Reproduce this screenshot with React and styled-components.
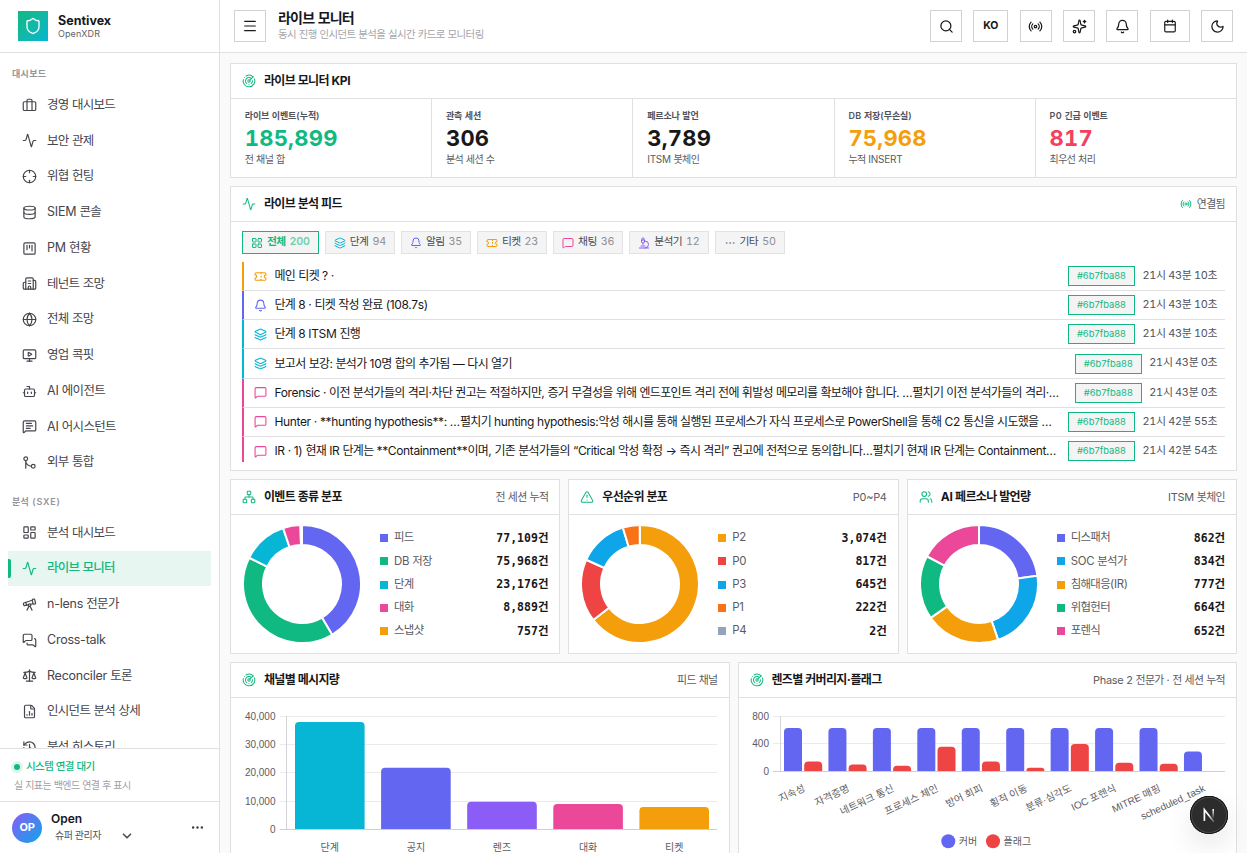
import React from "react";
import styled, { createGlobalStyle, css } from "styled-components";
import {
  Activity,
  Bell,
  Bot,
  Briefcase,
  Building2,
  Calendar,
  ChevronDown,
  Crosshair,
  Database,
  Ellipsis,
  FileChartColumn,
  GitMerge,
  Globe,
  History,
  Layers,
  LayoutDashboard,
  LayoutGrid,
  Menu,
  MessageSquare,
  MessageSquareText,
  MessagesSquare,
  Microscope,
  MonitorPlay,
  Moon,
  Network,
  Radar,
  Radio,
  Scale,
  Search,
  Shield,
  Sparkles,
  SquareKanban,
  Telescope,
  Ticket,
  TriangleAlert,
  Users,
} from "lucide-react";

const GlobalStyle = createGlobalStyle`
  * {
    box-sizing: border-box;
  }

  body {
    margin: 0;
    overflow: hidden;
    background: #fafafa;
    color: #18181b;
    font-family: Inter, "Noto Sans CJK KR", sans-serif;
    font-size: 12px;
    line-height: 1.5;
    letter-spacing: -0.02em;
  }

  svg {
    display: block;
    flex-shrink: 0;
  }
`;

const Hangul = styled.span`
  letter-spacing: calc(-0.056em + ${(p) => p.$track || 0}em);
`;

// Hangul glyphs run wide next to Inter, so they get their own tracking.
const T = ({ children, track }) =>
  String(children)
    .split(/([\uac00-\ud7a3]+)/)
    .map((part, i) =>
      i % 2 ? (
        <Hangul key={i} $track={track}>
          {part}
        </Hangul>
      ) : (
        part
      )
    );

const Shell = styled.div`
  display: flex;
  width: 1247px;
  height: 853px;
  overflow: hidden;
`;

/* sidebar */

const Sidebar = styled.aside`
  display: flex;
  flex-direction: column;
  width: 220px;
  flex-shrink: 0;
  background: #fff;
  border-right: 1px solid #e0e0e2;
`;

const Brand = styled.div`
  display: flex;
  align-items: center;
  gap: 10px;
  height: 53px;
  flex-shrink: 0;
  padding: 0 18px;
  border-bottom: 1px solid #e0e0e2;
`;

const BrandMark = styled.div`
  display: grid;
  place-items: center;
  width: 30px;
  height: 30px;
  color: #fff;
  background: linear-gradient(135deg, #10b981, #12b8a6 50%, #06b6d4);
`;

const BrandName = styled.div`
  font-size: 12.5px;
  font-weight: 700;
  line-height: 14px;
  letter-spacing: 0;
`;

const BrandSub = styled.div`
  font-size: 9px;
  line-height: 11px;
  letter-spacing: 0.01em;
  color: #5f5f66;
`;

const NavScroll = styled.nav`
  flex: 1;
  min-height: 0;
  overflow: hidden;
  padding: 0 8px;
`;

const NavLabel = styled.div`
  padding: ${(p) => p.$top}px 4px 7.25px;
  font-size: 9px;
  font-weight: 600;
  letter-spacing: 0.09em;
  color: #94949b;
`;

const NavItem = styled.div`
  position: relative;
  display: flex;
  align-items: center;
  gap: 10px;
  height: 34.75px;
  margin-bottom: 1px;
  padding: 0 14px;
  font-size: 12.5px;
  color: #45454d;

  ${(p) =>
    p.$active &&
    css`
      color: #10b981;
      font-weight: 500;
      background: #e7f6f1;

      &:before {
        content: "";
        position: absolute;
        left: 0;
        top: 8px;
        bottom: 8px;
        width: 3px;
        background: #10b981;
        border-radius: 0 2px 2px 0;
      }
    `}
`;

const Status = styled.div`
  height: 53px;
  flex-shrink: 0;
  padding: 9px 14px;
  border-top: 1px solid #e0e0e2;
`;

const StatusLine = styled.div`
  display: flex;
  align-items: center;
  gap: 6px;
  font-size: 10.5px;
  font-weight: 500;
  line-height: 17px;
  color: #10b981;
`;

const Dot = styled.i`
  width: 6px;
  height: 6px;
  border-radius: 50%;
  background: #10b981;
  box-shadow: 0 0 0 3px #dcf5ec;
`;

const StatusNote = styled.div`
  margin-top: 2px;
  font-size: 10px;
  line-height: 17px;
  color: #a0a0a6;
`;

const UserBar = styled.div`
  display: flex;
  align-items: center;
  height: 52px;
  flex-shrink: 0;
  padding: 0 14px 0 12px;
  border-top: 1px solid #e0e0e2;
`;

const Avatar = styled.div`
  display: grid;
  place-items: center;
  width: 30px;
  height: 30px;
  border-radius: 50%;
  background: linear-gradient(135deg, #8b5cf6, #0ea5e9);
  color: #fff;
  font-size: 11px;
  font-weight: 700;
`;

const UserInfo = styled.div`
  flex: 1;
  margin-left: 9px;
`;

const UserName = styled.div`
  font-size: 12px;
  font-weight: 600;
  line-height: 16px;
  letter-spacing: 0;
`;

const UserRole = styled.div`
  display: flex;
  align-items: center;
  justify-content: space-between;
  width: 83px;
  padding-left: 4px;
  font-size: 10px;
  line-height: 17px;
  color: #52525b;
`;

/* top bar */

const Main = styled.div`
  display: flex;
  flex-direction: column;
  flex: 1;
  min-width: 0;
`;

const TopBar = styled.header`
  display: flex;
  align-items: center;
  height: 53px;
  flex-shrink: 0;
  padding: 0 14px;
  background: #fff;
  border-bottom: 1px solid #e0e0e2;
`;

const SquareButton = styled.button`
  display: grid;
  place-items: center;
  width: ${(p) => p.$width || 32}px;
  height: 32px;
  padding: 0;
  border: 1px solid #d2d2d5;
  background: #fff;
  color: #18181b;
  font: 700 10.5px/1 Inter, sans-serif;
`;

const Heading = styled.div`
  flex: 1;
  margin-left: 12px;
`;

const PageTitle = styled.h1`
  margin: 0;
  font-size: 14px;
  font-weight: 700;
  line-height: 16px;
  letter-spacing: 0;
`;

const PageSub = styled.p`
  margin: 1px 0 -1px;
  font-size: 10.45px;
  line-height: 16px;
  color: #a5a5ab;
`;

const Tools = styled.div`
  display: flex;
  gap: 11.33px;
`;

/* cards */

const Content = styled.main`
  display: flex;
  flex-direction: column;
  gap: 8px;
  padding: 10px;
`;

const Row = styled.div`
  display: grid;
  grid-template-columns: repeat(${(p) => p.$cols}, minmax(0, 1fr));
  gap: 8px;
`;

const Card = styled.section`
  height: ${(p) => p.$height}px;
  background: #fff;
  border: 1px solid #e0e0e2;
`;

const CardHead = styled.div`
  display: flex;
  align-items: center;
  gap: 8px;
  height: 35px;
  padding: 0 11px;
  border-bottom: 1px solid #e0e0e2;

  > svg {
    color: #10b981;
  }
`;

const CardTitle = styled.h2`
  flex: 1;
  margin: 0;
  font-size: 12px;
  font-weight: 700;
  letter-spacing: -0.02em;
`;

const CardNote = styled.span`
  display: flex;
  align-items: center;
  gap: 5px;
  font-size: 10.9px;
  line-height: 16px;
  color: #5b5b62;

  svg {
    color: #10b981;
  }
`;

const KpiGrid = styled.div`
  display: grid;
  grid-template-columns: repeat(5, 1fr);
  gap: 1px;
  background: #e0e0e2;
`;

const Kpi = styled.div`
  height: 78px;
  padding: 10px 13.8px;
  background: #fff;
`;

const KpiLabel = styled.div`
  font-size: 9px;
  font-weight: 600;
  letter-spacing: 0.03em;
  color: #52525b;
`;

const KpiValue = styled.div`
  margin: 2px 0 1px;
  font-size: 22px;
  font-weight: 700;
  line-height: 26px;
  letter-spacing: 0.01em;
  font-variant-numeric: tabular-nums;
  color: ${(p) => p.$color};
`;

const KpiSub = styled.div`
  font-size: 10px;
  color: #5b5b62;
`;

/* feed */

const FeedBody = styled.div`
  padding: 9px 11px 0;
`;

const Chips = styled.div`
  display: flex;
  gap: 6px;
  margin-bottom: 8px;
`;

const Chip = styled.button`
  display: flex;
  align-items: center;
  gap: 4px;
  height: 23px;
  padding: 0 8px 1px;
  border: 1px solid ${(p) => (p.$active ? "#10b981" : "#e2e2e4")};
  background: #f4f4f5;
  font: inherit;
  font-size: 10.75px;
  font-weight: ${(p) => (p.$active ? 600 : 400)};
  letter-spacing: -0.02em;
  color: ${(p) => (p.$active ? "#10b981" : "#4a4a52")};

  svg {
    position: relative;
    top: 0.5px;
    color: ${(p) => p.$color};
  }
`;

const ChipCount = styled.span`
  opacity: 0.6;
  font-variant-numeric: tabular-nums;
`;

const FeedList = styled.div`
  height: 200px;
  overflow: hidden;
`;

const FeedRow = styled.div`
  display: flex;
  align-items: center;
  height: 29.17px;
  padding: 0 8px 0 10px;
  border-left: 2px solid ${(p) => p.$color};
  border-bottom: 1px solid #e0e0e2;

  > svg {
    color: ${(p) => p.$color};
  }
`;

const FeedText = styled.div`
  flex: 1;
  min-width: 0;
  margin: 0 8px 0 7.5px;
  overflow: hidden;
  white-space: nowrap;
  text-overflow: ellipsis;
  font-size: 12px;
  letter-spacing: -0.03em;
`;

const Tag = styled.span`
  height: 20px;
  padding: 0 8px;
  border: 1px solid #10b981;
  background: #f4f4f5;
  font-size: 9.4px;
  line-height: 18px;
  letter-spacing: 0;
  color: #10b981;
`;

const Time = styled.time`
  margin-left: 7.5px;
  padding-bottom: 2px;
  font-size: 10.9px;
  font-variant-numeric: tabular-nums;
  color: #52525b;
`;

/* donuts */

const DonutBody = styled.div`
  display: flex;
  align-items: center;
  height: 138px;
  padding: 0 11.5px 0 11px;
`;

const Legend = styled.div`
  flex: 1;
  margin: 1px 0 0 18px;
`;

const LegendRow = styled.div`
  display: flex;
  align-items: center;
  gap: 6px;
  height: 23.25px;
`;

const Swatch = styled.i`
  width: 8px;
  height: 8px;
  background: ${(p) => p.$color};
`;

const LegendName = styled.span`
  flex: 1;
  font-size: 11.4px;
  color: #5b5b62;
`;

const LegendValue = styled.b`
  font-family: "DejaVu Sans Mono", "Noto Sans CJK KR", monospace;
  font-size: 11.5px;
  line-height: 17px;
  letter-spacing: 0;
`;

const ChartSvg = styled.svg`
  font-family: "Liberation Sans", "Noto Sans CJK KR", sans-serif;
  font-size: 10px;
  letter-spacing: 0;
  fill: #5b5b62;
`;

const NextBadge = styled.div`
  position: fixed;
  left: 1190px;
  top: 796px;
  width: 38px;
  height: 38px;
  display: grid;
  place-items: center;
  border-radius: 50%;
  background: #2c2c2c;
  box-shadow: inset 0 0 0 1px #111, inset 0 0 0 2px #4a4a4a,
    0 12px 28px rgba(0, 0, 0, 0.1);
`;

const mainNav = [
  [Briefcase, "경영 대시보드"],
  [Activity, "보안 관제"],
  [Crosshair, "위협 헌팅"],
  [Database, "SIEM 콘솔"],
  [SquareKanban, "PM 현황"],
  [Building2, "테넌트 조망"],
  [Globe, "전체 조망"],
  [MonitorPlay, "영업 콕핏"],
  [Bot, "AI 에이전트"],
  [MessageSquareText, "AI 어시스턴트"],
  [GitMerge, "외부 통합"],
];

const analysisNav = [
  [LayoutDashboard, "분석 대시보드"],
  [Activity, "라이브 모니터", true],
  [Telescope, "n-lens 전문가"],
  [MessagesSquare, "Cross-talk"],
  [Scale, "Reconciler 토론"],
  [FileChartColumn, "인시던트 분석 상세"],
  [History, "분석 히스토리"],
];

const kpis = [
  ["라이브 이벤트(누적)", "185,899", "전 채널 합", "#10b981"],
  ["관측 세션", "306", "분석 세션 수", "#18181b"],
  ["페르소나 발언", "3,789", "ITSM 봇체인", "#18181b"],
  ["DB 저장(무손실)", "75,968", "누적 INSERT", "#f59e0b"],
  ["P0 긴급 이벤트", "817", "최우선 처리", "#f43f5e"],
];

const chips = [
  [LayoutGrid, "전체", 200, "#10b981", true],
  [Layers, "단계", 94, "#06b6d4"],
  [Bell, "알림", 35, "#6366f1"],
  [Ticket, "티켓", 23, "#f59e0b"],
  [MessageSquare, "채팅", 36, "#ec4899"],
  [Microscope, "분석기", 12, "#8b5cf6"],
  [Ellipsis, "기타", 50, "#8b93a7"],
];

const feed = [
  [Ticket, "#f59e0b", "메인 티켓 ? ·", "21시 43분 10초"],
  [Bell, "#6366f1", "단계 8 · 티켓 작성 완료 (108.7s)", "21시 43분 10초"],
  [Layers, "#06b6d4", "단계 8 ITSM 진행", "21시 43분 10초"],
  [
    Layers,
    "#06b6d4",
    "보고서 보강: 분석가 10명 합의 추가됨 — 다시 열기",
    "21시 43분 0초",
  ],
  [
    MessageSquare,
    "#ec4899",
    "Forensic · 이전 분석가들의 격리·차단 권고는 적절하지만, 증거 무결성을 위해 엔드포인트 격리 전에 휘발성 메모리를 확보해야 합니다. …펼치기 이전 분석가들의 격리·…",
    "21시 43분 0초",
  ],
  [
    MessageSquare,
    "#ec4899",
    "Hunter · **hunting hypothesis**: …펼치기 hunting hypothesis:악성 해시를 통해 실행된 프로세스가 자식 프로세스로 PowerShell을 통해 C2 통신을 시도했을 …",
    "21시 42분 55초",
  ],
  [
    MessageSquare,
    "#ec4899",
    "IR · 1) 현재 IR 단계는 **Containment**이며, 기존 분석가들의 “Critical 악성 확정 → 즉시 격리” 권고에 전적으로 동의합니다…펼치기 현재 IR 단계는 Containment…",
    "21시 42분 54초",
  ],
];

const donuts = [
  {
    icon: Network,
    title: "이벤트 종류 분포",
    note: "전 세션 누적",
    data: [
      ["피드", 77109, "#6366f1"],
      ["DB 저장", 75968, "#10b981"],
      ["단계", 23176, "#06b6d4"],
      ["대화", 8889, "#ec4899"],
      ["스냅샷", 757, "#f59e0b"],
    ],
  },
  {
    icon: TriangleAlert,
    title: "우선순위 분포",
    note: "P0~P4",
    data: [
      ["P2", 3074, "#f59e0b"],
      ["P0", 817, "#ef4444"],
      ["P3", 645, "#0ea5e9"],
      ["P1", 222, "#f97316"],
      ["P4", 2, "#94a3b8"],
    ],
  },
  {
    icon: Users,
    title: "AI 페르소나 발언량",
    note: "ITSM 봇체인",
    data: [
      ["디스패처", 862, "#6366f1"],
      ["SOC 분석가", 834, "#0ea5e9"],
      ["침해대응(IR)", 777, "#f59e0b"],
      ["위협헌터", 664, "#10b981"],
      ["포렌식", 652, "#ec4899"],
    ],
  },
];

const channels = [
  ["단계", 37800, "#06b6d4"],
  ["공지", 21600, "#6366f1"],
  ["렌즈", 9600, "#8b5cf6"],
  ["대화", 8800, "#ec4899"],
  ["티켓", 7800, "#f59e0b"],
];

const lenses = [
  ["지속성", 620, 135],
  ["자격증명", 620, 92],
  ["네트워크 통신", 620, 74],
  ["프로세스 체인", 620, 350],
  ["방어 회피", 620, 135],
  ["횡적 이동", 620, 45],
  ["분류·심각도", 620, 390],
  ["IOC 포렌식", 620, 120],
  ["MITRE 매핑", 620, 105],
  ["scheduled_task", 280, 0],
];

const arc = (from, to, R, r, c) => {
  const at = (rad, a) =>
    `${c + rad * Math.sin(a * 2 * Math.PI)} ${c - rad * Math.cos(a * 2 * Math.PI)}`;
  const big = to - from > 0.5 ? 1 : 0;
  return `M${at(R, from)}A${R} ${R} 0 ${big} 1 ${at(R, to)}L${at(r, to)}A${r} ${r} 0 ${big} 0 ${at(r, from)}Z`;
};

const Donut = ({ data }) => {
  const total = data.reduce((sum, d) => sum + d[1], 0);
  let start = 0;
  return (
    <svg width="120" height="120">
      {data.map(([name, value, color]) => {
        const from = start;
        start += value / total;
        return (
          <path
            key={name}
            d={arc(from, start, 59, 39, 60)}
            fill={color}
            stroke="#fff"
            strokeWidth="2"
            strokeLinejoin="round"
          />
        );
      })}
    </svg>
  );
};

const roundedBar = (x, y, w, h) => {
  const r = Math.min(4, h);
  return `M${x} ${y + h}V${y + r}a${r} ${r} 0 0 1 ${r} ${-r}H${x + w - r}a${r} ${r} 0 0 1 ${r} ${r}V${y + h}Z`;
};

const Axis = ({ x0, x1, ticks, base, step }) => (
  <g>
    {ticks.map((label, i) => {
      const y = Math.floor(base - i * step + 0.2) + 0.5;
      return (
        <React.Fragment key={label}>
          <path
            d={`M${x0 - 7} ${y}H${x1}`}
            stroke={i ? "#ebebed" : "#cfcfd3"}
            shapeRendering="crispEdges"
          />
          <text x={x0 - 11} y={y + 3.5} textAnchor="end">
            {label}
          </text>
        </React.Fragment>
      );
    })}
    <path
      d={`M${x0} ${base - step * (ticks.length - 1)}V${base}`}
      stroke="#d4d4d8"
      shapeRendering="crispEdges"
    />
  </g>
);

const ChannelChart = () => (
  <ChartSvg width="497" height="170">
    <Axis
      x0={55.5}
      x1={486}
      base={131.3}
      step={28.3}
      ticks={["0", "10,000", "20,000", "30,000", "40,000"]}
    />
    {channels.map(([name, value, color], i) => {
      const x = 64 + i * 86.1;
      const h = (value / 10000) * 28.3;
      return (
        <g key={name}>
          <path d={roundedBar(x, 131 - h, 69.6, h)} fill={color} />
          <text x={x + 34.8} y="152.5" textAnchor="middle">
            {name}
          </text>
        </g>
      );
    })}
  </ChartSvg>
);

const LensChart = () => (
  <ChartSvg width="497" height="170">
    <Axis x0={41} x1={485.5} base={73.5} step={27.8} ticks={["0", "400", "800"]} />
    {lenses.map(([name, cover, flag], i) => {
      const x = 45 + i * 44.44;
      const ch = (cover / 400) * 27.8;
      const fh = (flag / 400) * 27.8;
      return (
        <g key={name}>
          <path d={roundedBar(x, 73 - ch, 18, ch)} fill="#6366f1" />
          {flag > 0 && (
            <path d={roundedBar(x + 20.2, 73 - fh, 18, fh)} fill="#ef4444" />
          )}
          <text
            textAnchor="end"
            transform={`translate(${x + 20.3} 89.5) rotate(-25)`}
            y="3.5"
          >
            {name}
          </text>
        </g>
      );
    })}
    <circle cx="209.3" cy="143.3" r="7" fill="#6366f1" />
    <text x="219.7" y="147">
      커버
    </text>
    <circle cx="254" cy="143.3" r="7" fill="#ef4444" />
    <text x="264.6" y="147">
      플래그
    </text>
  </ChartSvg>
);

const Head = ({ icon: Icon, title, children }) => (
  <CardHead>
    <Icon size={14} strokeWidth={1.75} />
    <CardTitle>
      <T>{title}</T>
    </CardTitle>
    {children && <CardNote>{children}</CardNote>}
  </CardHead>
);

const NavGroup = ({ items }) =>
  items.map(([Icon, label, active]) => (
    <NavItem key={label} $active={active}>
      <Icon size={15} strokeWidth={1.9} />
      <span>
        <T>{label}</T>
      </span>
    </NavItem>
  ));

const App = () => (
  <Shell>
    <GlobalStyle />
    <Sidebar>
      <Brand>
        <BrandMark>
          <Shield size={18} strokeWidth={1.75} />
        </BrandMark>
        <div>
          <BrandName>Sentivex</BrandName>
          <BrandSub>OpenXDR</BrandSub>
        </div>
      </Brand>
      <NavScroll>
        <NavLabel $top={14}>
          <T track={0.09}>대시보드</T>
        </NavLabel>
        <NavGroup items={mainNav} />
        <NavLabel $top={13.75}>
          <T track={0.09}>분석 (SXE)</T>
        </NavLabel>
        <NavGroup items={analysisNav} />
      </NavScroll>
      <Status>
        <StatusLine>
          <Dot />
          <span>
            <T>시스템 연결 대기</T>
          </span>
        </StatusLine>
        <StatusNote>
          <T>실 지표는 백엔드 연결 후 표시</T>
        </StatusNote>
      </Status>
      <UserBar>
        <Avatar>OP</Avatar>
        <UserInfo>
          <UserName>Open</UserName>
          <UserRole>
            <span>
              <T>슈퍼 관리자</T>
            </span>
            <ChevronDown size={14} strokeWidth={3} />
          </UserRole>
        </UserInfo>
        <Ellipsis size={15} color="#3f3f46" />
      </UserBar>
    </Sidebar>
    <Main>
      <TopBar>
        <SquareButton>
          <Menu size={16} strokeWidth={1.75} />
        </SquareButton>
        <Heading>
          <PageTitle>
            <T>라이브 모니터</T>
          </PageTitle>
          <PageSub>
            <T>동시 진행 인시던트 분석을 실시간 카드로 모니터링</T>
          </PageSub>
        </Heading>
        <Tools>
          <SquareButton>
            <Search size={15} />
          </SquareButton>
          <SquareButton $width={35}>KO</SquareButton>
          <SquareButton>
            <Radio size={15} />
          </SquareButton>
          <SquareButton>
            <Sparkles size={15} />
          </SquareButton>
          <SquareButton>
            <Bell size={15} />
          </SquareButton>
          <SquareButton $width={40}>
            <Calendar size={14} />
          </SquareButton>
          <SquareButton>
            <Moon size={15} />
          </SquareButton>
        </Tools>
      </TopBar>
      <Content>
        <Card $height={115}>
          <Head icon={Radar} title="라이브 모니터 KPI" />
          <KpiGrid>
            {kpis.map(([label, value, sub, color]) => (
              <Kpi key={label}>
                <KpiLabel>
                  <T track={0.04}>{label}</T>
                </KpiLabel>
                <KpiValue $color={color}>{value}</KpiValue>
                <KpiSub>
                  <T>{sub}</T>
                </KpiSub>
              </Kpi>
            ))}
          </KpiGrid>
        </Card>
        <Card $height={285}>
          <Head icon={Activity} title="라이브 분석 피드">
            <Radio size={12} />
            <span>
              <T>연결됨</T>
            </span>
          </Head>
          <FeedBody>
            <Chips>
              {chips.map(([Icon, label, count, color, active]) => (
                <Chip key={label} $color={color} $active={active}>
                  <Icon size={12} />
                  <span>
                    <T>{label}</T>
                  </span>
                  <ChipCount>{count}</ChipCount>
                </Chip>
              ))}
            </Chips>
            <FeedList>
              {feed.map(([Icon, color, text, time]) => (
                <FeedRow key={text} $color={color}>
                  <Icon size={13} />
                  <FeedText>
                    <T>{text}</T>
                  </FeedText>
                  <Tag>#6b7fba88</Tag>
                  <Time>
                    <T>{time}</T>
                  </Time>
                </FeedRow>
              ))}
            </FeedList>
          </FeedBody>
        </Card>
        <Row $cols={3}>
          {donuts.map((d) => (
            <Card key={d.title} $height={175}>
              <Head icon={d.icon} title={d.title}>
                <span>
                  <T>{d.note}</T>
                </span>
              </Head>
              <DonutBody>
                <Donut data={d.data} />
                <Legend>
                  {d.data.map(([name, value, color]) => (
                    <LegendRow key={name}>
                      <Swatch $color={color} />
                      <LegendName>
                        <T>{name}</T>
                      </LegendName>
                      <LegendValue>
                        <T>{`${value.toLocaleString("en-US")}건`}</T>
                      </LegendValue>
                    </LegendRow>
                  ))}
                </Legend>
              </DonutBody>
            </Card>
          ))}
        </Row>
        <Row $cols={2}>
          <Card $height={220}>
            <Head icon={Radar} title="채널별 메시지량">
              <span>
                <T>피드 채널</T>
              </span>
            </Head>
            <ChannelChart />
          </Card>
          <Card $height={220}>
            <Head icon={Radar} title="렌즈별 커버리지·플래그">
              <span>
                <T>Phase 2 전문가 · 전 세션 누적</T>
              </span>
            </Head>
            <LensChart />
          </Card>
        </Row>
      </Content>
    </Main>
    <NextBadge>
      <svg width="16" height="16" viewBox="0 0 16 16" fill="none">
        <defs>
          <linearGradient id="fadeDiag" x1="8" y1="8" x2="14" y2="15" gradientUnits="userSpaceOnUse">
            <stop stopColor="#fff" />
            <stop offset="1" stopColor="#fff" stopOpacity="0.1" />
          </linearGradient>
          <linearGradient id="fadeStem" x1="0" y1="2" x2="0" y2="12" gradientUnits="userSpaceOnUse">
            <stop stopColor="#fff" />
            <stop offset="1" stopColor="#fff" stopOpacity="0" />
          </linearGradient>
        </defs>
        <path d="M3.4 14V2.8L13 15" stroke="url(#fadeDiag)" strokeWidth="1.7" />
        <rect x="11.4" y="2" width="1.6" height="9" fill="url(#fadeStem)" />
      </svg>
    </NextBadge>
  </Shell>
);

export default App;
